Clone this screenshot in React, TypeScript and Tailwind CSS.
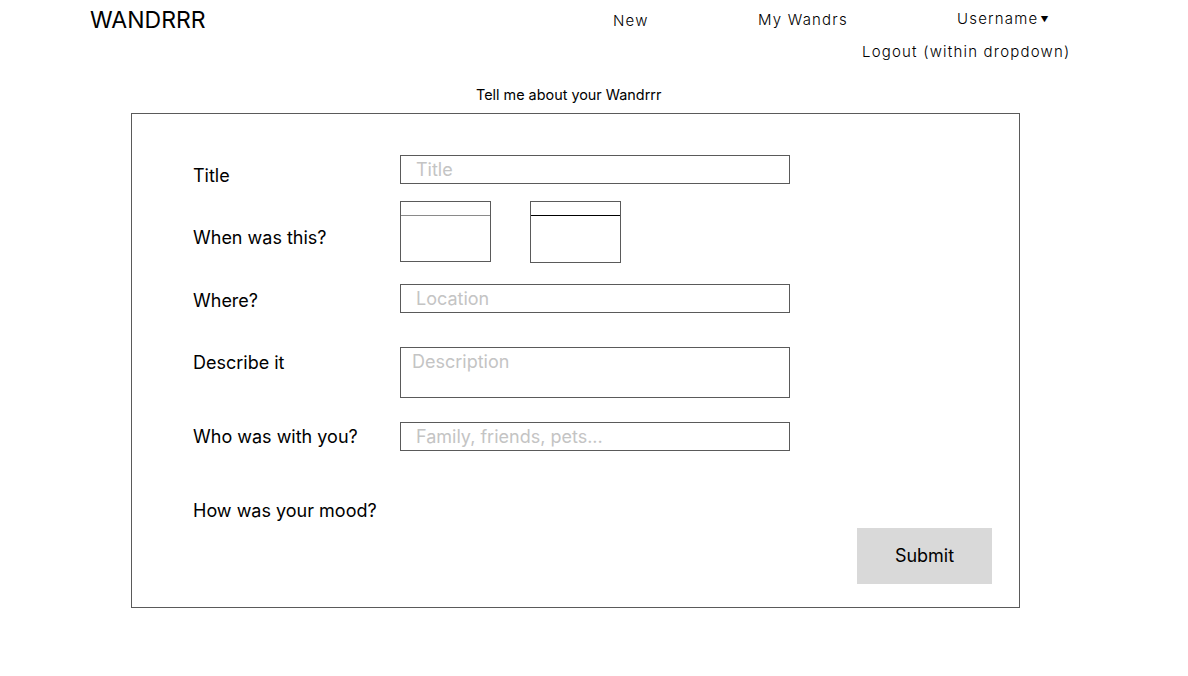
import React from "react";

export default function App() {
  const label = "text-[18px] leading-[24px] text-black";
  const nav = "text-[15px] leading-[20px] tracking-[1.2px] font-light";
  const inputCls =
    "w-[390px] h-[29px] border border-[#5a5a5a] bg-white text-[18px] leading-[24px] outline-none placeholder:text-[#c4c4c4]";
  return (
    <div className="w-[1188px] h-[676px] bg-white text-black font-['Inter',_'Noto_Sans',_sans-serif]">
      {/* header row 1 */}
      <div className="flex items-start h-[40px]">
        <div className="pl-[90px] w-[613px] pt-[5px] text-[23px] leading-[30px]">WANDRRR</div>
        <div className={`w-[145px] pt-[11px] ${nav}`}>New</div>
        <div className={`w-[199px] pt-[10px] ${nav}`}>My Wandrs</div>
        <div className={`pt-[9px] ${nav} flex items-center`}>
          Username<span className="text-[8px] ml-[2px] leading-[20px]">▼</span>
        </div>
      </div>
      {/* header row 2 */}
      <div className={`h-[22px] pl-[862px] pt-[2px] ${nav}`}>Logout (within dropdown)</div>
      <div className="mt-[23px] pl-[476px] text-[14.4px] leading-[20px]">Tell me about your Wandrrr</div>
      {/* form box */}
      <div className="mt-[8px] ml-[131px] w-[889px] h-[495px] border border-[#5a5a5a] pt-[41px] pl-[61px]">
        <div className="flex h-[29px] mb-[17px]">
          <div className={`w-[207px] pt-[9px] ${label}`}>Title</div>
          <input className={`${inputCls} pl-[15px]`} placeholder="Title" />
        </div>
        <div className="flex h-[61px] mb-[22px]">
          <div className={`w-[207px] pt-[25px] ${label}`}>When was this?</div>
          <div className="w-[91px] h-[61px] border border-[#5a5a5a]">
            <div className="h-[14px] border-b border-[#8a8a8a]" />
          </div>
          <div className="ml-[39px] w-[91px] h-[62px] border border-[#5a5a5a]">
            <div className="h-[14px] border-b border-black" />
          </div>
        </div>
        <div className="flex h-[29px] mb-[34px]">
          <div className={`w-[207px] pt-[5px] ${label}`}>Where?</div>
          <input className={`${inputCls} pl-[15px]`} placeholder="Location" />
        </div>
        <div className="flex h-[51px] mb-[24px]">
          <div className={`w-[207px] pt-[4px] ${label}`}>Describe it</div>
          <textarea
            className="w-[390px] h-[51px] border border-[#5a5a5a] bg-white text-[18px] leading-[24px] outline-none resize-none pl-[11px] pt-[2px] placeholder:text-[#c4c4c4]"
            placeholder="Description"
          />
        </div>
        <div className="flex h-[29px] mb-[48px]">
          <div className={`w-[207px] pt-[3px] ${label}`}>Who was with you?</div>
          <input className={`${inputCls} pl-[15px]`} placeholder="Family, friends, pets..." />
        </div>
        <div className={label}>How was your mood?</div>
        <div className="flex justify-end pr-[27px] mt-[5px]">
          <button className="w-[135px] h-[56px] bg-[#d9d9d9] text-[18px] leading-[24px] text-black">Submit</button>
        </div>
      </div>
    </div>
  );
}
